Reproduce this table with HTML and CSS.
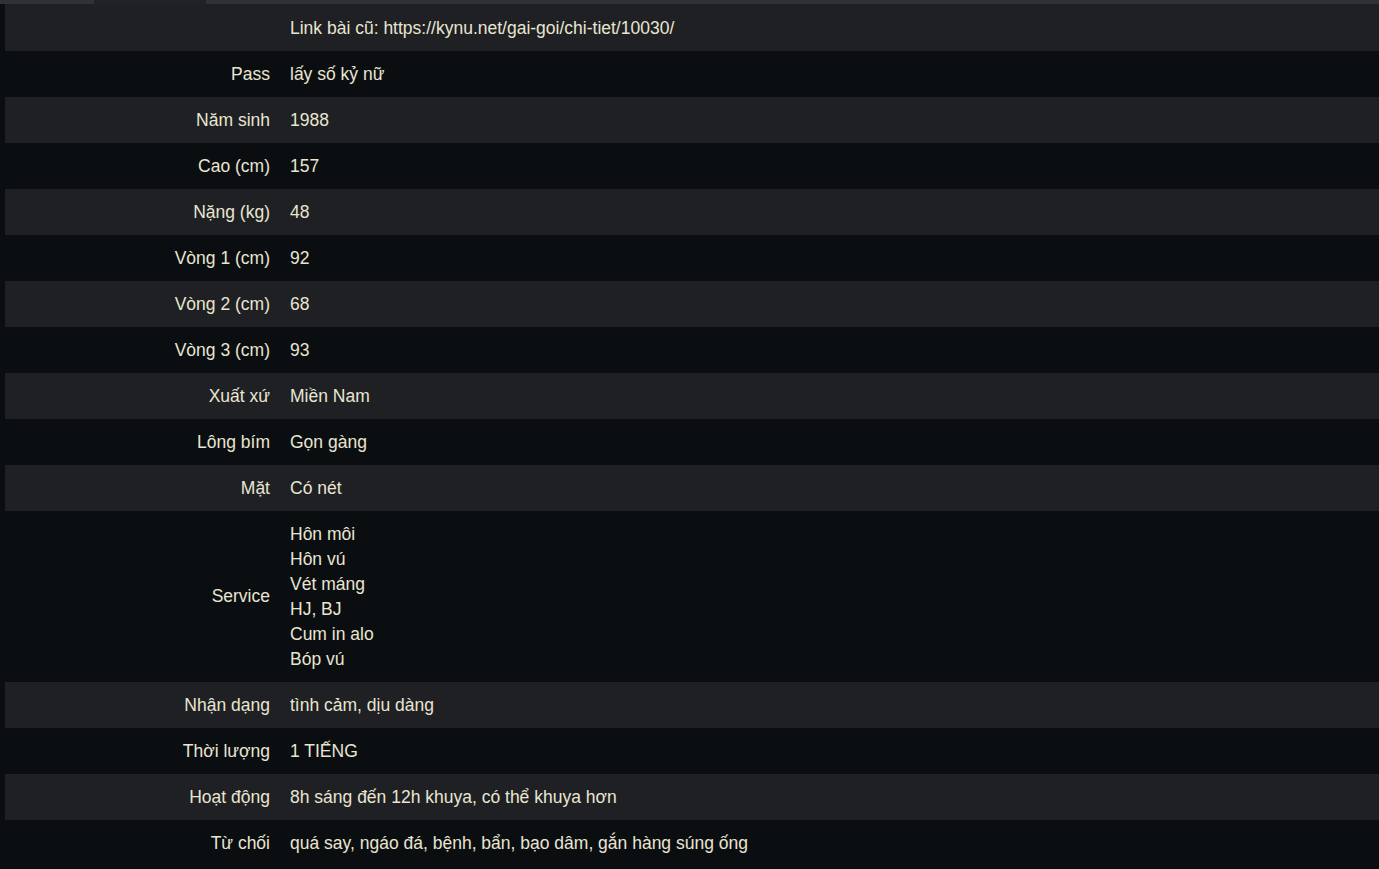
FILE: index.html
```html
<!DOCTYPE html>
<html lang="vi">
<head>
<meta charset="utf-8">
<link rel="stylesheet" href="styles.css">
</head>
<body>
<div class="topbar"><div class="tab"></div></div>
<div class="table">
  <div class="row first"><div class="label"></div><div class="value">Link bài cũ: https://kynu.net/gai-goi/chi-tiet/10030/</div></div>
  <div class="row"><div class="label">Pass</div><div class="value">lấy số kỷ nữ</div></div>
  <div class="row"><div class="label">Năm sinh</div><div class="value">1988</div></div>
  <div class="row"><div class="label">Cao (cm)</div><div class="value">157</div></div>
  <div class="row"><div class="label">Nặng (kg)</div><div class="value">48</div></div>
  <div class="row"><div class="label">Vòng 1 (cm)</div><div class="value">92</div></div>
  <div class="row"><div class="label">Vòng 2 (cm)</div><div class="value">68</div></div>
  <div class="row"><div class="label">Vòng 3 (cm)</div><div class="value">93</div></div>
  <div class="row"><div class="label">Xuất xứ</div><div class="value">Miền Nam</div></div>
  <div class="row"><div class="label">Lông bím</div><div class="value">Gọn gàng</div></div>
  <div class="row"><div class="label">Mặt</div><div class="value">Có nét</div></div>
  <div class="row"><div class="label">Service</div><div class="value">Hôn môi<br>Hôn vú<br>Vét máng<br>HJ, BJ<br>Cum in alo<br>Bóp vú</div></div>
  <div class="row"><div class="label">Nhận dạng</div><div class="value">tình cảm, dịu dàng</div></div>
  <div class="row"><div class="label">Thời lượng</div><div class="value">1 TIẾNG</div></div>
  <div class="row"><div class="label">Hoạt động</div><div class="value">8h sáng đến 12h khuya, có thể khuya hơn</div></div>
  <div class="row"><div class="label">Từ chối</div><div class="value">quá say, ngáo đá, bệnh, bẩn, bạo dâm, gắn hàng súng ống</div></div>
</div>
</body>
</html>
```
FILE: styles.css
```css
html, body {
  margin: 0;
  padding: 0;
  background: #0b0e11;
}
body {
  font-family: "Liberation Sans", Arial, sans-serif;
  font-size: 17.5px;
  color: #e9e5d1;
}
.topbar {
  height: 4px;
  background: #2e3237;
  padding-left: 94px;
}
.tab {
  width: 112px;
  height: 4px;
  background: #1f2226;
}
.table {
  margin-left: 5px;
}
.row {
  display: grid;
  grid-template-columns: 265px 1fr;
  column-gap: 20px;
  align-items: center;
  min-height: 46px;
  line-height: 25px;
}
.row:nth-child(odd) {
  background: #1e2024;
}
.row.first {
  min-height: 47px;
}
.row.first .value {
  padding-top: 11.5px;
}
.label {
  text-align: right;
}
.value {
  padding: 10.5px 0;
}
```
